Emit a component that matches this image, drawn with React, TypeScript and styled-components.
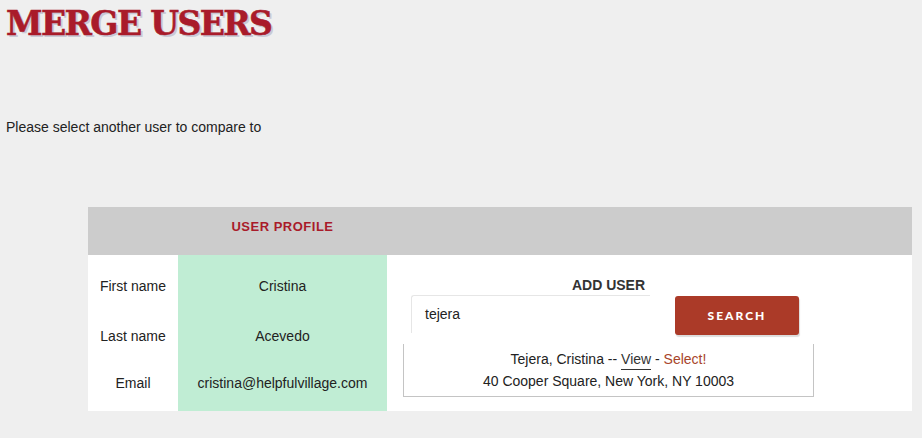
import React from "react";
import styled, { createGlobalStyle } from "styled-components";

const Global = createGlobalStyle`
  html, body { margin: 0; padding: 0; background: #efefef; }
  body { font-family: "Liberation Sans", Arial, sans-serif; color: #222; }
  * { box-sizing: border-box; }
`;

const Page = styled.div`
  padding: 0 10px 0 6px;
`;

const Title = styled.h1`
  margin: 0;
  padding-top: 6px;
  font-family: "DejaVu Serif", serif;
  font-weight: 700;
  font-size: 33px;
  line-height: 36px;
  letter-spacing: -1.6px;
  color: #a91b2a;
  -webkit-text-stroke: 0.6px #a91b2a;
  text-shadow: 2px 2px 0 #c9cad6;
`;

const Intro = styled.p`
  margin: 77px 0 0 0;
  font-size: 14px;
  line-height: 16px;
  color: #222;
`;

const Table = styled.div`
  margin: 72px 0 0 82px;
  display: grid;
  grid-template-columns: 90px 209px 1fr;
  grid-template-rows: 48px 62px 38px 56px;
  background: #fff;
`;

const HeadCell = styled.div`
  background: #cccccc;
  display: flex;
  align-items: center;
  justify-content: center;
  padding-bottom: 10px;
  font-size: 13px;
  font-weight: 700;
  letter-spacing: 0.5px;
  color: #a91b2a;
`;

const Label = styled.div`
  display: flex;
  align-items: center;
  justify-content: center;
  font-size: 14px;
  color: #222;
`;

const Value = styled(Label)`
  background: #c0edd4;
`;

const SideCell = styled.div`
  grid-column: 3;
  grid-row: 2 / span 3;
  padding: 22px 0 0 16px;
`;

const SearchArea = styled.div`
  width: 411px;
  display: flex;
  flex-direction: column;
`;

const AddTitle = styled.div`
  text-align: center;
  font-size: 14px;
  font-weight: 700;
  color: #333;
  line-height: 16px;
`;

const SearchRow = styled.div`
  display: flex;
  align-items: flex-start;
  gap: 25px;
  padding-left: 8px;
`;

const Input = styled.div`
  width: 239px;
  height: 38px;
  margin-top: 2px;
  border-top: 1px solid #e6e6e6;
  border-left: 1px solid #e6e6e6;
  border-radius: 3px 0 0 0;
  padding: 0 13px 2px;
  display: flex;
  align-items: center;
  font-size: 14px;
  color: #222;
`;

const Button = styled.button`
  width: 124px;
  height: 39px;
  margin-top: 3px;
  border: none;
  border-radius: 3px;
  background: #ab3a28;
  box-shadow: 1px 2px 1px #dcdcdc;
  color: #fff;
  font-family: Lato, sans-serif;
  font-weight: 900;
  font-size: 12px;
  letter-spacing: 2px;
  padding: 0;
`;

const Results = styled.div`
  margin-top: 9px;
  border: 1px solid #c4c4c4;
  border-top: none;
  height: 53px;
  padding-top: 4px;
  text-align: center;
  font-size: 14px;
  line-height: 22px;
  color: #222;
`;

const ViewLink = styled.span`
  color: #333;
  border-bottom: 1px solid #333;
  padding-bottom: 2px;
`;

const SelectLink = styled.span`
  color: #a8452a;
`;

export default function App() {
  return (
    <Page>
      <Global />
      <Title>MERGE USERS</Title>
      <Intro>Please select another user to compare to</Intro>
      <Table>
        <HeadCell />
        <HeadCell>USER PROFILE</HeadCell>
        <HeadCell />
        <Label>First name</Label>
        <Value>Cristina</Value>
        <SideCell>
          <SearchArea>
            <AddTitle>ADD USER</AddTitle>
            <SearchRow>
              <Input>tejera</Input>
              <Button>SEARCH</Button>
            </SearchRow>
            <Results>
              <div>
                Tejera, Cristina -- <ViewLink>View</ViewLink> - <SelectLink>Select!</SelectLink>
              </div>
              <div>40 Cooper Square, New York, NY 10003</div>
            </Results>
          </SearchArea>
        </SideCell>
        <Label>Last name</Label>
        <Value>Acevedo</Value>
        <Label>Email</Label>
        <Value>cristina@helpfulvillage.com</Value>
      </Table>
    </Page>
  );
}
